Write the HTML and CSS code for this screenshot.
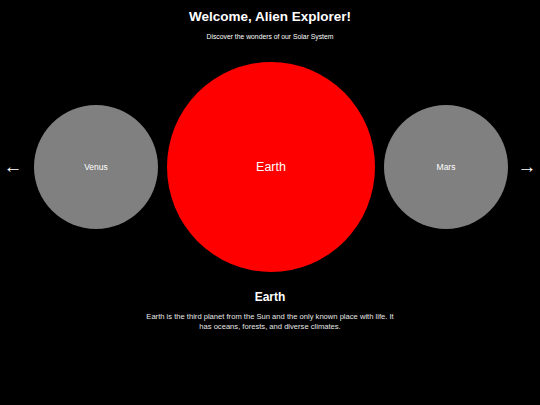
FILE: index.html
```html
<!DOCTYPE html>
<html>
<head>
<meta charset="utf-8">
<link rel="stylesheet" href="styles.css">
</head>
<body>
<div class="page">
  <header class="header">
    <h1 class="title">Welcome, Alien Explorer!</h1>
    <p class="subtitle">Discover the wonders of our Solar System</p>
  </header>
  <section class="carousel">
    <button class="arrow arrow-left">&larr;</button>
    <div class="planets">
      <div class="planet planet-side"><span>Venus</span></div>
      <div class="planet planet-active"><span>Earth</span></div>
      <div class="planet planet-side"><span>Mars</span></div>
    </div>
    <button class="arrow arrow-right">&rarr;</button>
  </section>
  <section class="info">
    <h2 class="info-title">Earth</h2>
    <p class="info-text">Earth is the third planet from the Sun and the only known place with life. It has oceans, forests, and diverse climates.</p>
  </section>
</div>
</body>
</html>
```
FILE: styles.css
```css
html, body {
  margin: 0;
  padding: 0;
  background: #000;
  color: #fff;
  font-family: "Liberation Sans", Arial, sans-serif;
}
.page {
  width: 540px;
  height: 405px;
  display: flex;
  flex-direction: column;
  align-items: center;
}
.header {
  display: flex;
  flex-direction: column;
  align-items: center;
  padding-top: 7px;
}
.title {
  margin: 0;
  font-size: 13.5px;
  font-weight: bold;
  line-height: 19px;
}
.subtitle {
  margin: 7px 0 0;
  font-size: 6.8px;
  line-height: 8px;
}
.carousel {
  width: 540px;
  display: flex;
  align-items: center;
  justify-content: space-between;
  margin-top: 21px;
}
.arrow {
  background: none;
  border: none;
  color: #fff;
  font-family: "Liberation Sans", sans-serif;
  font-size: 19px;
  padding: 0;
  width: 26px;
  line-height: 16px;
  text-align: center;
  cursor: pointer;
}
.planets {
  display: flex;
  align-items: center;
  gap: 9px;
  margin-left: 2px;
}
.planet {
  border-radius: 50%;
  display: flex;
  align-items: center;
  justify-content: center;
}
.planet-side {
  width: 124px;
  height: 124px;
  background: #808080;
  font-size: 8.5px;
}
.planet-active {
  width: 208px;
  height: 210px;
  background: #ff0000;
  font-size: 12.5px;
}
.info {
  display: flex;
  flex-direction: column;
  align-items: center;
  margin-top: 18px;
}
.info-title {
  margin: 0;
  font-size: 12px;
  line-height: 14px;
  font-weight: bold;
}
.info-text {
  margin: 8px 0 0;
  width: 260px;
  font-size: 7.6px;
  line-height: 9.5px;
  text-align: center;
  color: #e6e6e6;
}
```
